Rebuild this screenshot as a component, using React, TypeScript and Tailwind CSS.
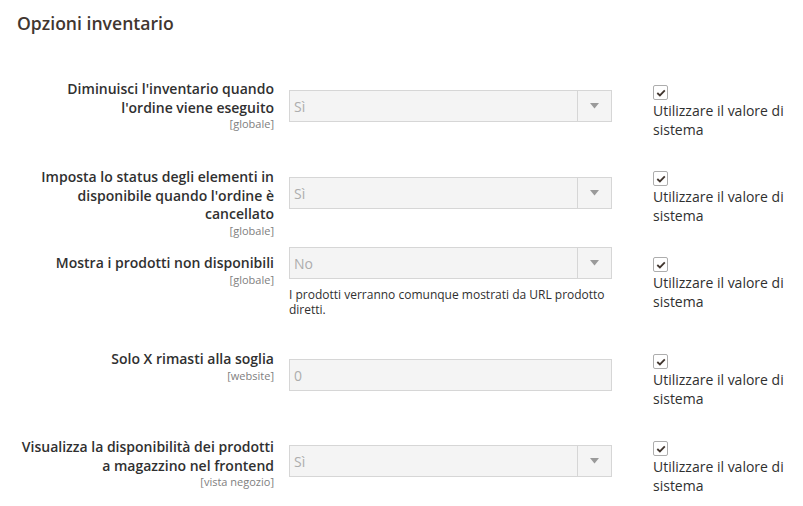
import React from 'react';

type Row = {
  label: string;
  scope: string;
  kind: 'select' | 'input';
  value: string;
  note?: string;
  height: string;
  labelTop: string;
  controlTop: string;
  checkTop: string;
};

const ROWS: Row[] = [
  {
    label: "Diminuisci l'inventario quando l'ordine viene eseguito",
    scope: 'globale',
    kind: 'select',
    value: 'Sì',
    height: 'h-[88px]',
    labelTop: 'mt-0',
    controlTop: 'mt-[10px]',
    checkTop: 'mt-[5px]',
  },
  {
    label: "Imposta lo status degli elementi in disponibile quando l'ordine è cancellato",
    scope: 'globale',
    kind: 'select',
    value: 'Sì',
    height: 'h-[79px]',
    labelTop: 'mt-0',
    controlTop: 'mt-[9px]',
    checkTop: 'mt-[3px]',
  },
  {
    label: 'Mostra i prodotti non disponibili',
    scope: 'globale',
    kind: 'select',
    value: 'No',
    note: 'I prodotti verranno comunque mostrati da URL prodotto diretti.',
    height: 'h-[103px]',
    labelTop: 'mt-[7px]',
    controlTop: 'mt-0',
    checkTop: 'mt-[10px]',
  },
  {
    label: 'Solo X rimasti alla soglia',
    scope: 'website',
    kind: 'input',
    value: '0',
    height: 'h-[88px]',
    labelTop: 'mt-0',
    controlTop: 'mt-[9px]',
    checkTop: 'mt-[4px]',
  },
  {
    label: 'Visualizza la disponibilità dei prodotti a magazzino nel frontend',
    scope: 'vista negozio',
    kind: 'select',
    value: 'Sì',
    height: 'h-[68px]',
    labelTop: 'mt-0',
    controlTop: 'mt-[7px]',
    checkTop: 'mt-[3px]',
  },
];

function Control({ row }: { row: Row }) {
  if (row.kind === 'input') {
    return (
      <div className="h-[32px] w-[323px] border border-[#d6d6d6] bg-[#f4f4f4] px-[4px] flex items-center text-[14px] text-[#adadad]">
        {row.value}
      </div>
    );
  }
  return (
    <div className="h-[32px] w-[323px] border border-[#d6d6d6] bg-[#f4f4f4] flex text-[14px] text-[#adadad]">
      <div className="flex-1 flex items-center px-[4px]">{row.value}</div>
      <div className="w-[34px] border-l border-[#d6d6d6] flex items-center justify-center">
        <svg width="9" height="6" viewBox="0 0 9 6">
          <path d="M0 0 L9 0 L4.5 5.5 Z" fill="#9a9a9a" />
        </svg>
      </div>
    </div>
  );
}

function Checkbox() {
  return (
    <div className="w-[15px] h-[15px] border border-[#adadad] rounded-[2px] bg-white flex items-center justify-center">
      <svg width="10" height="8" viewBox="0 0 10 8">
        <path d="M1.3 4 L3.9 6.4 L8.8 1.4" fill="none" stroke="#41362f" strokeWidth="1.8" />
      </svg>
    </div>
  );
}

export default function App() {
  return (
    <div
      className="w-[803px] h-[506px] bg-white overflow-hidden"
      style={{ fontFamily: '"Open Sans", "Noto Sans", sans-serif' }}
    >
      <div className="pl-[17px] pt-[11px] h-[80px]">
        <h2 className="text-[17.6px] leading-[24px] font-semibold text-[#41362f]">Opzioni inventario</h2>
      </div>

      {ROWS.map(row => (
        <div key={row.label} className={`flex items-start ${row.height}`}>
          <div className={`w-[274px] pl-[18px] pr-0 text-right ${row.labelTop}`}>
            <div className="text-[14px] leading-[18.5px] font-semibold text-[#303030]">{row.label}</div>
            <div className="text-[11px] leading-[13px] text-[#808080]">[{row.scope}]</div>
          </div>
          <div className={`ml-[15px] ${row.controlTop}`}>
            <Control row={row} />
            {row.note && (
              <div className="w-[323px] mt-[8px] text-[12px] leading-[15px] text-[#303030]">{row.note}</div>
            )}
          </div>
          <div className={`ml-[41px] w-[140px] ${row.checkTop}`}>
            <Checkbox />
            <div className="mt-[1px] text-[14px] leading-[19px] text-[#303030]">Utilizzare il valore di sistema</div>
          </div>
        </div>
      ))}
    </div>
  );
}
